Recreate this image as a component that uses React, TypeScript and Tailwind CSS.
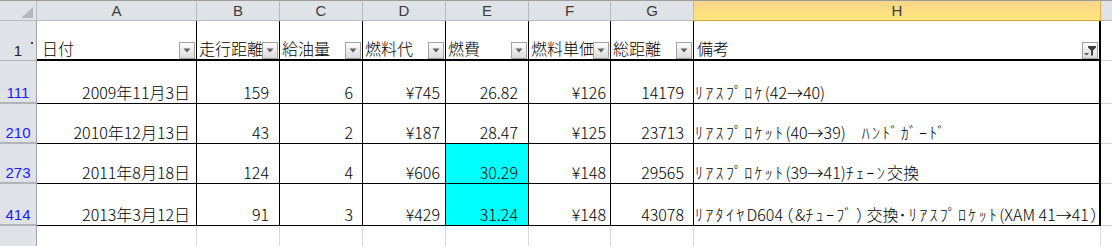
const cols =
  "grid grid-cols-[37px_160px_83px_83px_83px_83px_82px_83px_407px_1fr]";

type Row = {
  n: number;
  date: string;
  dist: string;
  fuel: string;
  cost: string;
  eff: string;
  unit: string;
  total: string;
  note: string;
  hi: boolean;
  h: string;
};

const rows: Row[] = [
  { n: 111, date: "2009年11月3日", dist: "159", fuel: "6", cost: "¥745", eff: "26.82", unit: "¥126", total: "14179", note: "ﾘｱｽﾌﾟﾛｹ(42→40)", hi: false, h: "h-[43px]" },
  { n: 210, date: "2010年12月13日", dist: "43", fuel: "2", cost: "¥187", eff: "28.47", unit: "¥125", total: "23713", note: "ﾘｱｽﾌﾟﾛｹｯﾄ(40→39)　ﾊﾝﾄﾞｶﾞｰﾄﾞ", hi: false, h: "h-[40px]" },
  { n: 273, date: "2011年8月18日", dist: "124", fuel: "4", cost: "¥606", eff: "30.29", unit: "¥148", total: "29565", note: "ﾘｱｽﾌﾟﾛｹｯﾄ(39→41)ﾁｪｰﾝ交換", hi: true, h: "h-[40px]" },
  { n: 414, date: "2013年3月12日", dist: "91", fuel: "3", cost: "¥429", eff: "31.24", unit: "¥148", total: "43078", note: "ﾘｱﾀｲﾔD604（&ﾁｭｰﾌﾞ）交換･ﾘｱｽﾌﾟﾛｹｯﾄ(XAM 41→41）", hi: true, h: "h-[42px]" },
];

const letters = ["A", "B", "C", "D", "E", "F", "G"];
const heads = ["日付", "走行距離", "給油量", "燃料代", "燃費", "燃料単価", "総距離"];

// half-width kana in the sheet font run wider than Noto's, so space them out a bit
function Note({ text }: { text: string }) {
  const parts = text.split(/([\uFF61-\uFF9F]+|[（）])/).filter(Boolean);
  return (
    <>
      {parts.map((p, i) => {
        if (p === "（" || p === "）")
          return (
            <span key={i} className="px-[2px] [font-feature-settings:'palt']">
              {p}
            </span>
          );
        if (/^[\uFF61-\uFF9F]+$/.test(p))
          return <span key={i} className="tracking-[2.3px]">{p}</span>;
        return <span key={i} className="whitespace-pre">{p}</span>;
      })}
    </>
  );
}

function FilterButton({ active }: { active?: boolean }) {
  return (
    <span className="absolute right-[1px] bottom-0 flex h-[17px] w-[16px] items-center justify-center border border-[#a3a3a3] bg-gradient-to-b from-[#fdfdfd] to-[#dcdcdc]">
      {active ? (
        <svg width="14" height="12" viewBox="0 0 14 12">
          <path d="M5 1h8v1.5l-3 3V10l-2 1V5.5l-3-3z" fill="#3f3f3f" />
          <path d="M1 8h5l-2.5 2.5z" fill="#555" />
        </svg>
      ) : (
        <svg width="8" height="5" viewBox="0 0 8 5">
          <path d="M0.5 0.5h7L4 4.5z" fill="#5f5f5f" />
        </svg>
      )}
    </span>
  );
}

function RowHead({ label, blue, h, thick }: { label: string; blue?: boolean; h: string; thick?: boolean }) {
  return (
    <div
      className={`${h} relative flex items-end justify-center border-r border-[#9ea3a9] bg-[#dfe3e8] pb-[1px] font-['Liberation_Sans',sans-serif] text-[15px] leading-[17px] ${
        thick ? "border-b-2 border-b-[#b1b5ba]" : "border-b border-b-[#b1b5ba]"
      } ${blue ? "text-[#1a1aff]" : "text-[#222]"}`}
    >
      {label}
    </div>
  );
}

export default function App() {
  return (
    <div className="h-[246px] w-[1112px] overflow-hidden border-t border-[#9d9d9d] bg-white font-['Noto_Sans_CJK_JP',sans-serif] text-[16px] font-light text-black">
      {/* column letters */}
      <div className={`${cols} h-[20px] font-['Liberation_Sans',sans-serif] text-[15px] font-normal leading-[19px] text-[#3b3b3b]`}>
        <div className="relative border-r border-b border-[#b7bcc2] bg-[#dfe3e8]">
          <svg className="absolute right-[3px] bottom-[2px]" width="12" height="11" viewBox="0 0 12 11">
            <path d="M12 0V11H0z" fill="#b3b8bd" />
          </svg>
        </div>
        {letters.map((l) => (
          <div key={l} className="border-r border-b border-[#b7bcc2] bg-[#dfe3e8] text-center">
            {l}
          </div>
        ))}
        <div className="border-r border-b border-r-[#e2b35a] border-b-[#d9a440] bg-gradient-to-b from-[#f8d68a] to-[#ffe77c] text-center">
          H
        </div>
        <div className="border-b border-[#b7bcc2] bg-[#dfe3e8]" />
      </div>

      {/* header row 1 */}
      <div className={cols}>
        <div className="relative">
          <RowHead label="1" h="h-[40px]" />
          <span className="absolute top-[21px] right-[4px] h-[2px] w-[2px] bg-[#444]" />
        </div>
        {heads.map((t, i) => (
          <div
            key={t}
            className={`relative flex h-[40px] items-end overflow-hidden whitespace-nowrap border-r border-b-2 border-black pb-[1px] leading-[20px] ${
              i === 0 ? "pl-[5px]" : "pl-[2px]"
            }`}
          >
            {t}
            <FilterButton />
          </div>
        ))}
        <div className="relative flex h-[40px] items-end border-r-2 border-b-2 border-black pb-[1px] pl-[3px] leading-[20px]">
          備考
          <FilterButton active />
        </div>
        <div className="h-[40px] border-b border-[#d4d4d4]" />
      </div>

      {/* data rows */}
      {rows.map((r) => (
        <div key={r.n} className={`${cols} leading-[20px]`}>
          <RowHead label={String(r.n)} blue h={r.h} thick />
          <div className={`${r.h} flex items-end justify-end border-r border-b border-black pr-[6px] pb-[1px]`}>{r.date}</div>
          <div className={`${r.h} flex items-end justify-end border-r border-b border-black pr-[10px] pb-[1px]`}>{r.dist}</div>
          <div className={`${r.h} flex items-end justify-end border-r border-b border-black pr-[9px] pb-[1px]`}>{r.fuel}</div>
          <div className={`${r.h} flex items-end justify-end border-r border-b border-black pr-[5px] pb-[1px]`}>{r.cost}</div>
          <div
            className={`${r.h} flex items-end justify-end border-r border-b border-black pr-[10px] pb-[1px] ${
              r.hi ? "bg-[#00ffff]" : ""
            }`}
          >
            {r.eff}
          </div>
          <div className={`${r.h} flex items-end justify-end border-r border-b border-black pr-[4px] pb-[1px]`}>{r.unit}</div>
          <div className={`${r.h} flex items-end justify-end border-r border-b border-black pr-[9px] pb-[1px]`}>{r.total}</div>
          <div className={`${r.h} flex items-end overflow-hidden whitespace-nowrap border-r-2 border-b border-black pl-[1px] pb-[1px]`}>
            <Note text={r.note} />
          </div>
          <div className={`${r.h} border-b border-[#d4d4d4]`} />
        </div>
      ))}

      {/* empty row */}
      <div className={`${cols} h-[21px]`}>
        <div className="border-r border-[#9ea3a9] bg-[#dfe3e8]" />
        {Array.from({ length: 8 }).map((_, i) => (
          <div key={i} className="border-r border-[#d9d9d9]" />
        ))}
        <div />
      </div>
    </div>
  );
}
